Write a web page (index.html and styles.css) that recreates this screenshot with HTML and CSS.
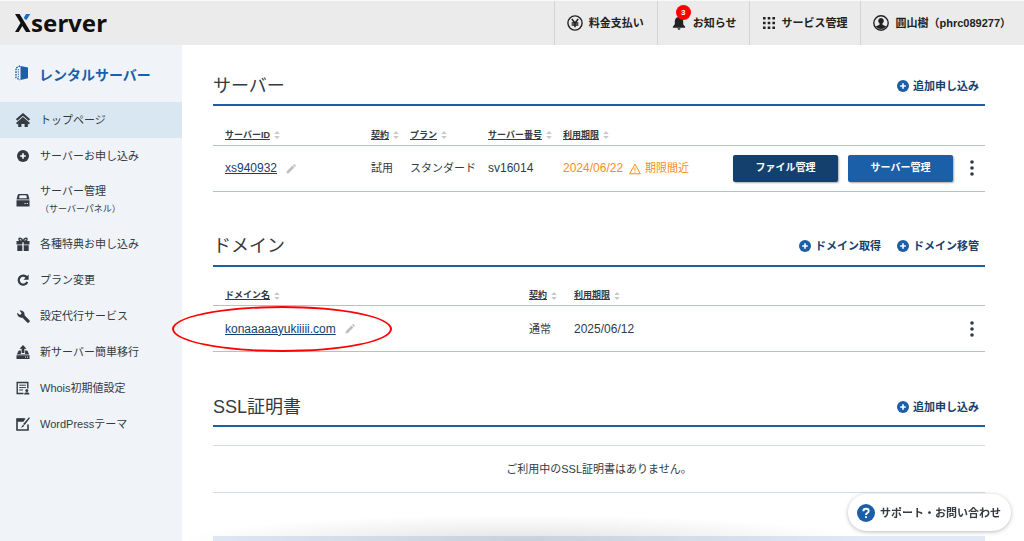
FILE: index.html
```html
<!DOCTYPE html>
<html lang="ja">
<head>
<meta charset="utf-8">
<title>Xserver</title>
<link rel="stylesheet" href="styles.css">
</head>
<body>
<svg class="defs" aria-hidden="true">
  <symbol id="plus" viewBox="0 0 12 12"><circle cx="6" cy="6" r="6"/><path d="M6 3.2v5.6M3.2 6h5.6" stroke="#fff" stroke-width="1.6"/></symbol>
  <symbol id="sort" viewBox="0 0 6 8"><path d="M0.2 3 3 0l2.8 3zM0.2 5 3 8l2.8-3z"/></symbol>
  <symbol id="pencil" viewBox="0 0 10 10"><path d="M0.4 9.6 1 7 6.4 1.6l2 2L3 9zM7 1l.8-.8q.4-.3.8 0L9.8 1.4q.3.4 0 .8L9 3z"/></symbol>
  <symbol id="dots" viewBox="0 0 4 16"><circle cx="2" cy="2" r="1.8"/><circle cx="2" cy="8" r="1.8"/><circle cx="2" cy="14" r="1.8"/></symbol>
</svg>
<header class="topbar">
  <a class="logo" href="#"><svg class="logo-x" viewBox="0 0 16 18"><path d="M0 0h4.6l3.4 5.6L10.200 9 15.600 18H11L7.300 11.900 3.700 18H0L5.500 9z"/><path class="logo-tip" d="M11 0h4.300l-4 6.300L8.700 4z"/></svg><span>server</span></a>
  <nav class="topnav">
    <a class="topnav-item" href="#">
      <svg class="icon16" viewBox="0 0 16 16"><circle cx="8" cy="8" r="7.100" fill="none" stroke="#222" stroke-width="1.400"/><path d="M4.800 4 8 8l3.200-4M8 7.800v4.400M4.600 8h6.800M4.600 10h6.800" fill="none" stroke="#222" stroke-width="1.500"/></svg>
      <span>料金支払い</span></a>
    <a class="topnav-item topnav-news" href="#">
      <span class="bell"><svg class="icon14" viewBox="0 0 14 16"><path d="M7 1C4 1 2.200 3.300 2.200 6v3.500L0 12.200v1.200h14v-1.200l-2.200-2.700V6C11.800 3.300 10 1 7 1zM5.200 14h3.600Q8.500 15.800 7 15.800T5.200 14z"/></svg><span class="badge">3</span></span>
      <span>お知らせ</span></a>
    <a class="topnav-item" href="#">
      <svg class="icon12" viewBox="0 0 12 12"><path d="M0 0h2.600v2.600H0zM4.700 0h2.600v2.600H4.700zM9.400 0H12v2.600H9.400zM0 4.700h2.600v2.600H0zM4.700 4.700h2.600v2.600H4.700zM9.400 4.700H12v2.600H9.400zM0 9.400h2.600V12H0zM4.700 9.400h2.600V12H4.700zM9.400 9.400H12V12H9.400z"/></svg>
      <span>サービス管理</span></a>
    <a class="topnav-item topnav-user" href="#">
      <svg class="icon16" viewBox="0 0 16 16"><circle cx="8" cy="8" r="7.200" fill="none" stroke="#222" stroke-width="1.400"/><path d="M8 3a2.900 2.900 0 0 1 1.500 5.300v1.500l3.800 1.700A6.800 6.800 0 0 1 2.700 11.500l3.800-1.700V8.300A2.900 2.900 0 0 1 8 3z"/></svg>
      <span>圓山樹（phrc089277）</span></a>
  </nav>
</header>
<div class="layout">
  <aside class="sidebar">
    <a class="side-title" href="#">
      <svg class="cube" viewBox="0 0 14 16"><path d="M5.500 1 13 2.600v10.600L5.500 15z"/><path d="M5 1 1 3v9.700L5 15" fill="none" stroke="#1b5fa8" stroke-width="1.400" stroke-dasharray="1.600 1"/><path d="M3.300 4v8.500" stroke="#1b5fa8" stroke-dasharray="1.300 1"/></svg>
      <span>レンタルサーバー</span></a>
    <nav class="side-nav">
      <a class="side-item current" href="#"><svg class="icon14" viewBox="0 0 14 14"><path d="M.6 7 7 1.500 13.400 7" fill="none" stroke="#333a42" stroke-width="2.200"/><path d="M.6 10.800 7 5.300l6.400 5.500" fill="none" stroke="#333a42" stroke-width="1.900"/><path d="M2.200 9.800 7 6l4.800 3.800V14H8.600v-3H5.400v3H2.200z"/></svg><span>トップページ</span></a>
      <a class="side-item" href="#"><svg class="icon14" viewBox="-1 -1 14 14"><use href="#plus" width="12" height="12"/></svg><span>サーバーお申し込み</span></a>
      <a class="side-item side-double" href="#"><svg class="icon14" viewBox="0 0 14 14"><path d="M3 1h8q1 0 1.300 1L13.500 6.500H.5L1.700 2Q2 1 3 1zM.5 7.300h13V13.500H.5z"/><path d="M3.600 2.300h6.800l.5 3H3.100z" fill="#f0f4f8"/><path d="M8.500 10.500h1.200M10.700 10.500h1.200" stroke="#f0f4f8"/></svg><span>サーバー管理<small>（サーバーパネル）</small></span></a>
      <a class="side-item" href="#"><svg class="icon14" viewBox="0 0 14 14"><path d="M.5 4h5.800v3.400H.5zM7.700 4h5.800v3.400H7.700zM1.300 8.200h5V14h-5zM7.700 8.200h5V14h-5z"/><path d="M7 4.300Q3 4.500 3 2.300 3 1 4.300 1.200 6 1.500 7 4.300 8 1.500 9.700 1.200 11 1 11 2.300 11 4.500 7 4.300z" fill="none" stroke="#333a42" stroke-width="1.400"/></svg><span>各種特典お申し込み</span></a>
      <a class="side-item" href="#"><svg class="icon14" viewBox="0 0 14 14"><path d="M11 4.700A4.500 4.500 0 1 0 11.300 9" fill="none" stroke="#333a42" stroke-width="2.200"/><path d="M12.600 1.500v5.200H7.500z"/></svg><span>プラン変更</span></a>
      <a class="side-item" href="#"><svg class="icon14" viewBox="0 0 14 14"><path d="M1.300 3.800 4 6l1.700-1.700L3.500 1.600A4 4 0 0 1 8.500 6.300l4.700 4.600a1.500 1.500 0 0 1-2.300 2.300L6.300 8.500A4 4 0 0 1 1.300 3.800z"/></svg><span>設定代行サービス</span></a>
      <a class="side-item" href="#"><svg class="icon14" viewBox="0 0 14 14"><path d="M7 0 10.500 3.800H8.400V8H5.600V3.800H3.500zM2.700 5.500h2.200V9h4.200V5.500h2.200l1.900 4H.8zM.5 10.200h13V14H.5z"/><path d="M9 12.100h1M11 12.100h1" stroke="#f0f4f8"/></svg><span>新サーバー簡単移行</span></a>
      <a class="side-item" href="#"><svg class="icon14" viewBox="0 0 14 14"><path d="M7.500 12.500H1.200v-11h10.600v6" fill="none" stroke="#333a42" stroke-width="1.400"/><path d="M3.200 4.200h6.600M3.200 6.600h6.600M3.200 9h3.800" stroke="#333a42"/><circle cx="10.800" cy="9.500" r="1.500"/><path d="M8 13.500Q8.200 11.300 10.800 11.300T13.600 13.500z"/></svg><span>Whois初期値設定</span></a>
      <a class="side-item" href="#"><svg class="icon14" viewBox="0 0 14 14"><path d="M8.500 2H1v11h11V7.500" fill="none" stroke="#333a42" stroke-width="1.600"/><path d="M1 1.500h8.500L7.500 4.700H1zM13 .3l1 .8-5.300 7-1.500-1.200zM7 7.500l1.200 1Q7.500 10.800 4.500 10.500 6 9.800 7 7.500z"/></svg><span>WordPressテーマ</span></a>
    </nav>
  </aside>
  <main class="main">
    <section class="block">
      <div class="block-head"><h2>サーバー</h2><div class="actions"><a href="#"><svg class="icon12"><use href="#plus"/></svg>追加申し込み</a></div></div>
      <table class="list">
        <colgroup><col class="s-id"><col class="s-contract"><col class="s-plan"><col class="s-number"><col><col class="s-ops"></colgroup>
        <thead><tr>
          <th><a href="#">サーバーID</a><svg class="sort"><use href="#sort"/></svg></th>
          <th><a href="#">契約</a><svg class="sort"><use href="#sort"/></svg></th>
          <th><a href="#">プラン</a><svg class="sort"><use href="#sort"/></svg></th>
          <th><a href="#">サーバー番号</a><svg class="sort"><use href="#sort"/></svg></th>
          <th><a href="#">利用期限</a><svg class="sort"><use href="#sort"/></svg></th>
          <th></th></tr></thead>
        <tbody><tr>
          <td class="latin"><a href="#">xs940932</a><svg class="pencil"><use href="#pencil"/></svg></td>
          <td>試用</td><td>スタンダード</td><td class="latin">sv16014</td>
          <td class="warn"><span class="latin">2024/06/22</span><svg class="alert" viewBox="0 0 12 12"><path d="M6 1.200 11.300 10.800H.7zM6 4.500v3.200M6 8.600v1.100" fill="none" stroke="#ff8c1a"/></svg>期限間近</td>
          <td><div class="ops"><button class="btn btn-dark">ファイル管理</button><button class="btn">サーバー管理</button><button class="more" aria-label="メニュー"><svg viewBox="0 0 4 16"><use href="#dots"/></svg></button></div></td>
        </tr></tbody>
      </table>
    </section>
    <section class="block">
      <div class="block-head"><h2>ドメイン</h2><div class="actions"><a href="#"><svg class="icon12"><use href="#plus"/></svg>ドメイン取得</a><a href="#"><svg class="icon12"><use href="#plus"/></svg>ドメイン移管</a></div></div>
      <table class="list">
        <colgroup><col class="d-name"><col class="d-contract"><col><col class="d-ops"></colgroup>
        <thead><tr>
          <th><a href="#">ドメイン名</a><svg class="sort"><use href="#sort"/></svg></th>
          <th><a href="#">契約</a><svg class="sort"><use href="#sort"/></svg></th>
          <th><a href="#">利用期限</a><svg class="sort"><use href="#sort"/></svg></th>
          <th></th></tr></thead>
        <tbody><tr>
          <td class="marked"><a href="#">konaaaaayukiiiii.com</a><svg class="pencil"><use href="#pencil"/></svg><span class="ring"></span></td>
          <td>通常</td><td class="latin">2025/06/12</td>
          <td><div class="ops"><button class="more" aria-label="メニュー"><svg viewBox="0 0 4 16"><use href="#dots"/></svg></button></div></td>
        </tr></tbody>
      </table>
    </section>
    <section class="block">
      <div class="block-head"><h2>SSL証明書</h2><div class="actions"><a href="#"><svg class="icon12"><use href="#plus"/></svg>追加申し込み</a></div></div>
      <p class="empty">ご利用中のSSL証明書はありません。</p>
    </section>
    <div class="band"></div>
  </main>
</div>
<div class="shade"></div>
<button class="support"><svg viewBox="0 0 18 18"><circle cx="9" cy="9" r="9" fill="#1b5fa8"/><path d="M6.300 7.200Q6.300 4.700 9 4.700T11.700 7Q11.700 8.200 10.300 9T9 11M9 12.200v1.900" fill="none" stroke="#fff" stroke-width="1.900"/></svg>サポート・お問い合わせ</button>
</body>
</html>
```
FILE: styles.css
```css
* { box-sizing: border-box; }
body {
  display: flex;
  flex-direction: column;
  margin: 0;
  min-height: 100vh;
  background: #fff;
  color: #333a42;
  font: 11px/18px "Liberation Sans", "Noto Sans CJK JP", sans-serif;
}
a { color: inherit; text-decoration: none; }
button { font: inherit; border: 0; padding: 0; cursor: pointer; }
svg { flex: none; fill: currentColor; }
.defs { position: absolute; width: 0; height: 0; }
.icon12 { width: 12px; height: 12px; }
.icon14 { width: 14px; height: 14px; }
.icon16 { width: 16px; height: 16px; }

.topbar {
  display: flex;
  justify-content: space-between;
  height: 45px;
  background: #ebebeb;
  border-top: 1px solid #f8f8f8;
  color: #222;
}
.logo {
  display: flex;
  align-items: center;
  padding-left: 15px;
  color: #111;
  font: bold 24px/40px "Noto Sans", sans-serif;
}
.logo-x { width: 16px; height: 18px; }
.logo-tip { fill: #1b6fc0; }
.topnav { display: flex; font-weight: bold; }
.topnav-item {
  display: flex;
  align-items: center;
  gap: 6px;
  padding: 0 13px 0 12px;
  border-left: 1px solid #d4d4d4;
}
.topnav-news { gap: 7px; padding-left: 14px; }
.topnav-item .icon12 { margin-left: 1px; }
.bell { position: relative; display: flex; }
.badge {
  position: absolute;
  left: 4px;
  top: -11px;
  width: 15px;
  height: 15px;
  border-radius: 50%;
  background: #f00;
  color: #fff;
  font-size: 8px;
  line-height: 15px;
  text-align: center;
}

.layout { display: flex; flex: 1; }
.sidebar { width: 182px; flex: none; background: #f0f4f8; }
.side-title {
  display: flex;
  align-items: center;
  gap: 10px;
  height: 57px;
  padding: 3px 0 0 15px;
  color: #1b5fa8;
  font-size: 14px;
  font-weight: bold;
}
.cube { width: 14px; height: 16px; margin-bottom: 4px; }
.side-item {
  display: flex;
  align-items: center;
  gap: 10px;
  height: 36px;
  padding-left: 16px;
}
.side-item.current { background: #d9e7f2; }
.side-double { height: 52px; }
.side-item small { display: block; font-size: 9px; }

.main { flex: 1; padding: 17px 39px 0 31px; }
.block { margin-bottom: 31px; }
.block-head {
  display: flex;
  align-items: center;
  justify-content: space-between;
  height: 44px;
  padding-top: 5px;
  border-bottom: 2px solid #1b5fa8;
}
h2 { margin: 0; font-size: 18px; font-weight: normal; }
.actions { display: flex; gap: 16px; padding-right: 6px; color: #16406e; font-weight: bold; }
.actions a { display: flex; align-items: center; gap: 4px; }
.actions .icon12 { color: #1b5fa8; }

.list { width: 100%; table-layout: fixed; border-collapse: collapse; }
.list th, .list td { padding: 0; text-align: left; white-space: nowrap; border-bottom: 1px solid #a9c3da; }
.list th { height: 39px; padding-top: 19px; font-size: 9px; line-height: 18px; }
.list th a { text-decoration: underline; }
.list td { height: 46px; }
.list th:first-child, .list td:first-child { padding-left: 12px; }
.s-id { width: 158px; }
.s-contract { width: 39px; }
.s-plan { width: 78px; }
.s-number { width: 75px; }
.s-ops { width: 252px; }
.d-name { width: 316px; }
.d-contract { width: 45px; }
.d-ops { width: 40px; }
.sort { width: 6px; height: 8px; margin-left: 4px; color: #c4c8cc; vertical-align: middle; }
.pencil { width: 10px; height: 10px; margin-left: 9px; color: #c0c0c0; vertical-align: middle; }
.latin { font-size: 12px; }
.list td:first-child a { color: #16406e; text-decoration: underline; }
.warn { color: #ff8c1a; }
.alert { width: 12px; height: 12px; margin: 0 4px 0 6px; vertical-align: middle; }
.ops { display: flex; align-items: center; justify-content: flex-end; gap: 10px; padding-right: 11px; }
.btn {
  flex: 1;
  height: 27px;
  border-radius: 2px;
  background: #1b5fa8;
  color: #fff;
  font-size: 10px;
  font-weight: bold;
  box-shadow: 1px 1px 2px #0005;
}
.btn-dark { background: #14406e; }
.more { display: flex; justify-content: center; width: 4px; margin-left: 7px; background: none; color: #333a42; }
.more svg { width: 4px; height: 16px; }
.list .marked { position: relative; font-size: 12px; }
.ring {
  position: absolute;
  left: -41px;
  top: 0;
  width: 220px;
  height: 46px;
  border: 2px solid #f00;
  border-radius: 50%;
}
.empty {
  margin: 18px 0 0;
  padding: 14px 0;
  border: solid #cfdde9;
  border-width: 1px 0;
  text-align: center;
}
.band { height: 5px; margin-top: 43px; background: #dfeaf6; }
.shade {
  position: fixed;
  left: 180px;
  right: 160px;
  bottom: 0;
  height: 26px;
  background: radial-gradient(ellipse 50% 100% at 50% 100%, #0000001c, #0000);
}
.support {
  position: fixed;
  right: 13px;
  bottom: 10px;
  display: flex;
  align-items: center;
  gap: 5px;
  height: 37px;
  padding: 0 10px 0 9px;
  border-radius: 19px;
  background: #fff;
  color: #333a42;
  font-weight: bold;
  box-shadow: 0 1px 4px #0004;
}
.support svg { width: 18px; height: 18px; }
```
